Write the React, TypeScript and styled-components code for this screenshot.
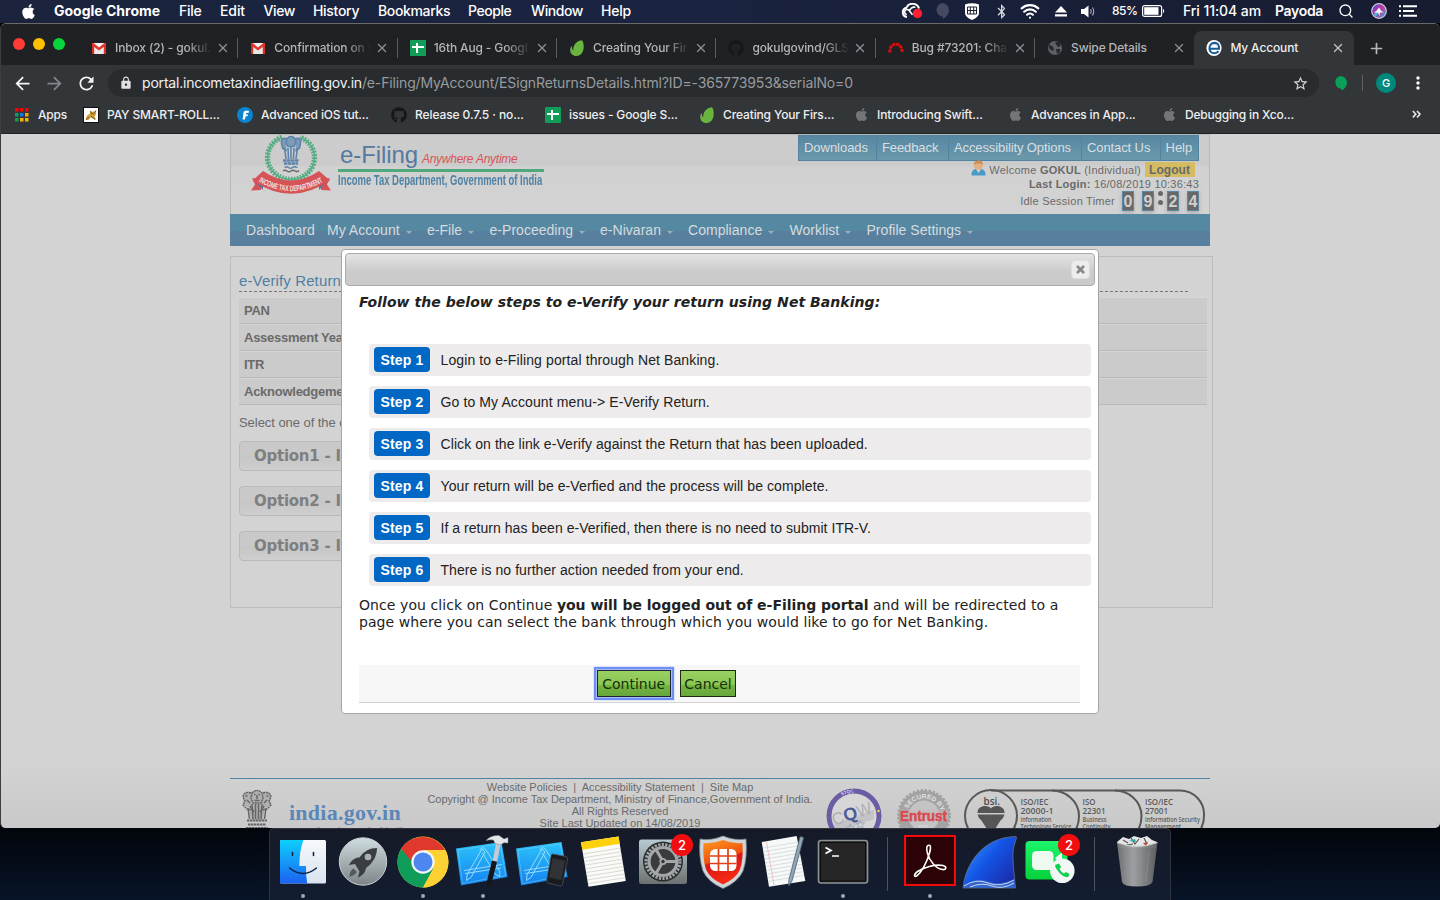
import React from 'react';
import styled, { createGlobalStyle } from 'styled-components';
import { FaApple, FaGithub, FaBluetoothB } from 'react-icons/fa';
import { MdArrowBack, MdArrowForward, MdRefresh, MdLock, MdStarBorder, MdMoreVert } from 'react-icons/md';
import { Search, Wifi, X, Plus } from 'lucide-react';

const UI = 'Inter, "Open Sans", sans-serif';
const ARIAL = '"Liberation Sans", Arial, sans-serif';
const VERDANA = '"DejaVu Sans", Verdana, sans-serif';

const Global = createGlobalStyle`
  *, *::before, *::after { box-sizing: border-box; }
  body { margin: 0; background: #040a18; overflow: hidden; }
  svg { display: block; flex: none; }
`;

const Desktop = styled.div`
  width: 1440px;
  height: 900px;
  display: flex;
  flex-direction: column;
  overflow: hidden;
  background: linear-gradient(#02050b 828px, #071427 900px);
`;

/* ---------- macOS menu bar ---------- */

const MenuBar = styled.header`
  height: 23px;
  flex: none;
  display: flex;
  align-items: flex-start;
  background: linear-gradient(90deg, #1b243c, #1a2340 45%, #171c30);
  color: #fff;
  font: 500 14px/22px ${UI};
`;

const MenuSlot = styled.div<{ $w: number; $ls?: number; $weight?: number; $size?: number }>`
  width: ${p => p.$w}px;
  height: 22px;
  flex: none;
  display: flex;
  align-items: center;
  white-space: pre;
  letter-spacing: ${p => p.$ls ?? 0}px;
  font-weight: ${p => p.$weight ?? 500};
  font-size: ${p => p.$size ?? 14}px;
`;

const menus: [string, number, number, number][] = [
  ['Google Chrome', 125, 0, 700],
  ['File', 41, -0.3, 500],
  ['Edit', 43.5, -0.1, 500],
  ['View', 49.5, -0.4, 500],
  ['History', 65, -0.3, 500],
  ['Bookmarks', 90, -0.36, 500],
  ['People', 63, -0.45, 500],
  ['Window', 70, -0.4, 500],
  ['Help', 300, -0.2, 500],
];

/* ---------- Browser window ---------- */

const BrowserWindow = styled.div`
  height: 805px;
  flex: none;
  display: flex;
  flex-direction: column;
  border-top: 1px solid #6a6a68;
  border-left: 1px solid #3b3e41;
  border-radius: 6px 6px 5px 5px;
  overflow: hidden;
  background: #202124;
`;

const TabStrip = styled.div`
  height: 41px;
  flex: none;
  display: flex;
  align-items: flex-end;
  background: #202124;
`;

const Lights = styled.div`
  width: 78px;
  height: 41px;
  padding: 0 0 1px 12px;
  display: flex;
  align-items: center;
  gap: 8px;
`;

const Light = styled.i<{ $c: string }>`
  width: 12px;
  height: 12px;
  border-radius: 50%;
  background: ${p => p.$c};
`;

const TabBox = styled.div<{ $active?: boolean; $sep?: boolean }>`
  position: relative;
  width: ${p => (p.$active ? 160 : 159.35)}px;
  height: 34px;
  flex: none;
  padding-left: 12px;
  display: flex;
  align-items: center;
  font: 500 12px/16px ${UI};
  letter-spacing: -0.14px;
  color: ${p => (p.$active ? '#eceded' : '#b4b6b9')};
  background: ${p => (p.$active ? '#323639' : 'transparent')};
  border-radius: 8px 8px 0 0;
  &::after {
    content: '';
    position: absolute;
    right: 0;
    top: 7px;
    height: 20px;
    width: 1px;
    background: ${p => (p.$sep ? '#5a5c60' : 'transparent')};
  }
`;

const TabLabel = styled.span<{ $fade?: boolean }>`
  width: 97px;
  margin-left: 8px;
  overflow: hidden;
  white-space: nowrap;
  ${p => p.$fade && 'mask-image: linear-gradient(90deg, #000 72px, transparent 97px);'}
`;

const TabClose = styled(X)`
  margin-left: 4px;
  color: #8d9094;
`;

const NewTab = styled.div`
  height: 34px;
  margin-left: 14px;
  display: flex;
  align-items: center;
  color: #b5b8bb;
`;

const Toolbar = styled.div`
  height: 36px;
  flex: none;
  display: flex;
  align-items: center;
  padding-left: 5px;
  background: #323639;
  color: #fff;
`;

const NavButton = styled.span<{ $dim?: boolean }>`
  width: 32px;
  display: flex;
  justify-content: center;
  color: ${p => (p.$dim ? '#84878a' : '#f4f4f4')};
`;

const Omnibox = styled.div`
  width: 1211px;
  height: 28px;
  margin: 0 15px 0 6px;
  padding: 0 10px 0 11px;
  border-radius: 14px;
  display: flex;
  align-items: center;
  background: #282c2f;
  font: 400 14px/20px ${UI};
`;

const Host = styled.span`
  margin-left: 9px;
  color: #f0f1f2;
  letter-spacing: -0.19px;
`;

const Path = styled.span`
  flex: 1;
  color: #989b9f;
  letter-spacing: -0.138px;
`;

const ToolDivider = styled.i`
  width: 1px;
  height: 16px;
  margin: 0 13px 0 15px;
  background: #5c6063;
`;

const Avatar = styled.span`
  width: 20px;
  height: 20px;
  margin-right: 12px;
  border-radius: 50%;
  background: #00897b;
  font: 500 11px/20px ${UI};
  text-align: center;
`;

const BookmarkBar = styled.div`
  height: 33px;
  flex: none;
  padding: 0 0 5px 13px;
  display: flex;
  align-items: center;
  background: #323639;
  border-bottom: 1px solid #212427;
  color: #eeeff0;
  font: 500 12px/16px ${UI};
`;

const Bookmark = styled.span<{ $w: number; $ls: number }>`
  width: ${p => p.$w}px;
  flex: none;
  display: flex;
  align-items: center;
  gap: 8px;
  white-space: nowrap;
  letter-spacing: ${p => p.$ls}px;
`;

/* ---------- e-Filing page ---------- */

const Page = styled.main`
  position: relative;
  flex: 1;
  min-height: 0;
  overflow: hidden;
  padding-left: 229px;
  background: linear-gradient(#d3d3d3 630px, #c9c9c9 694px);
  color: #6a6a6a;
  font-family: ${ARIAL};
`;

const SiteHeader = styled.div`
  width: 980px;
  height: 80px;
  display: flex;
  justify-content: space-between;
  border: 1px solid #b9b9b9;
  border-bottom: 0;
  background: linear-gradient(#cdcdcd, #cbcbcb 30px, #d1d1d1 32px, #d3d3d3);
  padding: 0 10px 0 19px;
`;

const Brand = styled.div`
  display: flex;
`;

const BrandText = styled.div`
  width: 206px;
  margin: 5px 0 0 6px;
`;

const BrandTitle = styled.div`
  height: 28px;
  display: flex;
  align-items: baseline;
  gap: 4px;
  padding-left: 2px;
  font-size: 24px;
  line-height: 29px;
  letter-spacing: -0.1px;
  color: #557a9f;
  white-space: nowrap;
  em {
    font-size: 12px;
    letter-spacing: -0.25px;
    color: #d95458;
  }
`;

const BrandSub = styled.div`
  margin-top: 1px;
  border-top: 3px solid #4fa97c;
  white-space: nowrap;
  color: #4f82a3;
  span {
    display: block;
    width: 302px;
    font: bold 14px/17px ${ARIAL};
    transform: scaleX(0.677);
    transform-origin: 0 0;
  }
`;

const HeaderSide = styled.div`
  display: flex;
  flex-direction: column;
  align-items: flex-end;
`;

const TopLinks = styled.div`
  display: flex;
  height: 26px;
`;

const TopLink = styled.span<{ $w: number; $ls: number }>`
  width: ${p => p.$w}px;
  padding-left: 5px;
  font-size: 13px;
  line-height: 24px;
  letter-spacing: ${p => p.$ls}px;
  white-space: nowrap;
  color: #d9dfe2;
  border: 1px solid #5283a0;
  border-left-width: 0;
  background: linear-gradient(#5788a2, #6b99ab);
  &:first-child { border-left-width: 1px; }
`;

const Welcome = styled.div`
  height: 17px;
  display: flex;
  align-items: center;
  font-size: 11px;
  letter-spacing: 0.25px;
  white-space: pre;
  padding-right: 4px;
  svg { margin: -3px 3px 0 0; }
`;

const Logout = styled.b`
  margin-left: 4px;
  width: 50px;
  height: 15px;
  padding-left: 4px;
  font-size: 12px;
  line-height: 16px;
  letter-spacing: 0.06px;
  background: #d5bb62;
`;

const LastLogin = styled.div`
  font-size: 11px;
  line-height: 12px;
  letter-spacing: 0.22px;
`;

const Timer = styled.div`
  height: 20px;
  display: flex;
  align-items: center;
  font-size: 11px;
  letter-spacing: 0.24px;
  margin-top: 1px;
`;

const Digit = styled.span<{ $ml: number }>`
  width: 12px;
  height: 20px;
  margin-left: ${p => p.$ml}px;
  border: 1px solid #5b87a5;
  background: #686868;
  color: #cfcfcf;
  font: bold 16px/20px ${ARIAL};
  text-align: center;
  box-shadow: 0 2px 4px #8888;
  display: flex;
  justify-content: center;
`;

const Colon = styled.span`
  width: 5px;
  height: 20px;
  margin-left: 4px;
  display: flex;
  flex-direction: column;
  gap: 4px;
  i {
    width: 5px;
    height: 5px;
    border-radius: 50%;
    background: #686868;
  }
`;

const SiteNav = styled.nav`
  width: 980px;
  height: 32px;
  padding-left: 16px;
  display: flex;
  background: linear-gradient(#5589a2 17px, #587f9d 17px);
  color: #d5dbde;
  font-size: 14px;
  line-height: 33px;
`;

const SiteNavItem = styled.span<{ $w: number }>`
  width: ${p => p.$w}px;
  display: flex;
  align-items: center;
  gap: 6px;
  white-space: nowrap;
  letter-spacing: 0.03px;
`;

const Caret = styled.i`
  width: 0;
  height: 0;
  margin-top: 5px;
  border: 3px solid transparent;
  border-bottom: 0;
  border-top-color: #a3aeb3;
`;

const ContentBox = styled.section`
  width: 983px;
  height: 352px;
  margin-top: 10px;
  padding: 14px 5px 0 8px;
  border: 1px solid #bcbcbc;
`;

const PageTitle = styled.h1`
  width: 949px;
  height: 21px;
  margin: 0 0 5px;
  border-bottom: 1px dashed #777;
  font: 400 15px/19px ${ARIAL};
  letter-spacing: 0.13px;
  color: #50809f;
`;

const DetailRow = styled.div`
  height: 27px;
  padding: 0 5px;
  border-bottom: 1px solid #bababa;
  font: bold 13px/25px ${ARIAL};
  letter-spacing: -0.26px;
  border-top: 1px solid #d6d6d6;
  background: #cbcbcb;
  white-space: nowrap;
`;

const SelectHint = styled.p`
  margin: 10px 0 11px;
  font-size: 13px;
  line-height: 15px;
  letter-spacing: -0.05px;
`;

const OptionBar = styled.div`
  width: 850px;
  height: 30px;
  margin-bottom: 15px;
  padding-left: 14px;
  border: 1px solid #bababa;
  border-radius: 4px;
  background: linear-gradient(#c9c9c9 50%, #c6c6c6 50%, #cecece);
  font: bold 15px/29px ${VERDANA};
  letter-spacing: -0.25px;
  color: #7f7f7f;
`;

const SiteFooter = styled.footer`
  width: 980px;
  margin-top: 170px;
  height: 80px;
  border-top: 1px solid #5083a3;
  display: flex;
`;

const FooterLeft = styled.div`
  width: 195px;
  display: flex;
  padding: 9px 0 0 11px;
  gap: 16px;
`;

const IndiaGov = styled.div`
  margin-top: 11px;
  font: bold 22px/28px "Liberation Serif", serif;
  letter-spacing: 0.26px;
  color: #5b87b8;
  white-space: nowrap;
  small {
    display: block;
    margin: -2px 0 0 14px;
    font: 400 10px/14px ${ARIAL};
    letter-spacing: 0.3px;
  }
`;

const FooterText = styled.div`
  width: 390px;
  padding-top: 2px;
  text-align: center;
  white-space: pre;
  font-size: 11px;
  line-height: 12px;
`;

/* ---------- Dialog ---------- */

const Dialog = styled.div`
  position: absolute;
  left: 340px;
  top: 115px;
  width: 758px;
  height: 465px;
  padding: 3px;
  border: 1px solid #a6a6a6;
  border-radius: 4px;
  background: #fff;
  color: #222;
`;

const DialogBar = styled.div`
  height: 33px;
  padding: 6px 4px 0 0;
  display: flex;
  justify-content: flex-end;
  border: 1px solid #aaa;
  border-radius: 4px;
  background: linear-gradient(#e4e4e4, #cccccc 55%, #cacaca);
`;

const DialogClose = styled.span`
  width: 19px;
  height: 19px;
  display: flex;
  align-items: center;
  justify-content: center;
  border: 1px solid #dedede;
  border-radius: 4px;
  background: #ededed;
  color: #888;
`;

const DialogBody = styled.div`
  padding: 8px 4px 0 14px;
`;

const DialogHeading = styled.h2`
  margin: 0 0 33px;
  font: italic bold 14px/17px ${VERDANA};
  letter-spacing: 0.05px;
  white-space: nowrap;
`;

const Step = styled.div`
  height: 32px;
  margin: 0 0 10px 10px;
  padding-left: 5px;
  display: flex;
  align-items: center;
  border-radius: 4px;
  background: #edebeb;
`;

const StepBadge = styled.b`
  width: 56px;
  height: 25px;
  margin: -1px 10.5px 0 0;
  border-radius: 4px;
  background: #0067c5;
  color: #fff;
  font: bold 14px/26px ${ARIAL};
  letter-spacing: 0.2px;
  text-align: center;
`;

const StepText = styled.span<{ $ls: number }>`
  font: 400 14px/32px ${ARIAL};
  letter-spacing: ${p => p.$ls}px;
`;

const Note = styled.p`
  margin: 0;
  padding-top: 1px;
  font: 400 14px/17px ${VERDANA};
  letter-spacing: 0.075px;
  white-space: nowrap;
  b { letter-spacing: -0.02px; }
`;

const ButtonRow = styled.div`
  width: 721px;
  height: 38px;
  margin-top: 34px;
  padding: 5px 0 0 237.5px;
  display: flex;
  gap: 9px;
  border-bottom: 1px solid #d2d2d2;
  background: #f7f7f7;
`;

const GreenButton = styled.button<{ $w: number; $focus?: boolean }>`
  width: ${p => p.$w}px;
  height: 27px;
  padding: 0;
  border: 1px solid #1c2b12;
  border-radius: 0;
  background: linear-gradient(#98d062, #8cc653 55%, #77b540 55%, #66a63c);
  color: #14300a;
  font: 400 14px/27px ${VERDANA};
  white-space: nowrap;
  ${p => p.$focus && 'border-color: #1b2138; box-shadow: 0 0 0 1px #a9bdf6, 0 0 1px 3px #6d8ef2;'}
`;

const ButtonLabel = styled.span`
  display: block;
  line-height: 27px;
`;

/* ---------- Dock ---------- */

const DockShelf = styled.div`
  width: 902px;
  height: 72px;
  margin-left: 269px;
  flex: none;
  display: flex;
  padding-left: 3px;
  border: 1px solid #30343f;
  border-bottom: 0;
  border-radius: 5px 5px 0 0;
  background: linear-gradient(#161a28, #121d30);
`;

const DockSlot = styled.div`
  position: relative;
  width: 60px;
  height: 72px;
  flex: none;
  svg { margin-top: -1px; }
`;

const RunningDot = styled.i`
  position: absolute;
  left: 28px;
  top: 65px;
  width: 4px;
  height: 4px;
  border-radius: 50%;
  background: #a4a8b3;
`;

const Badge = styled.b`
  position: absolute;
  left: 38px;
  top: 5px;
  width: 22px;
  height: 22px;
  border-radius: 50%;
  background: #f20d10;
  color: #fff;
  font: 500 13px/22px ${UI};
  text-align: center;
`;

const DockDivider = styled.i`
  width: 27px;
  height: 54px;
  margin-top: 8px;
  background: linear-gradient(#4e5360, #4e5360) 14px 0 / 1px 100% no-repeat;
`;

/* ---------- Small icons ---------- */

const Gmail = () => (
  <svg width="16" height="16" viewBox="0 0 16 16">
    <path d="M1 3h14v11H1z" fill="#e9e9e9" />
    <path d="M1 14V4l2.2 1.6V14zM15 14V4l-2.2 1.6V14z" fill="#d93025" />
    <path d="M1 3.6L8 9l7-5.4V3H1z" fill="#f4f4f4" />
    <path d="M1 3h1.6L8 7.4 13.4 3H15v2.2L8 10.4 1 5.2z" fill="#e0362b" />
  </svg>
);

const Sheets = () => (
  <svg width="16" height="16" viewBox="0 0 16 16">
    <rect width="16" height="16" rx="1" fill="#0f9d58" />
    <path d="M6 3h2v3h6v2H8v5H6V8H2V6h4z" fill="#fff" />
  </svg>
);

const Leaf = () => (
  <svg width="16" height="16" viewBox="0 0 16 16">
    <path d="M12.6.3c1.5.6 2.4 4.2 2 8.200-.5 4.500-3.400 7.500-7.200 7.500-3.700 0-6.300-2.600-6.200-6 .1-1.800.6-3 1.300-4 .4 0 .3.500.3 1.100.1 1.500.6 2.900 1.500 3.500C3.700 6 6.800 1.200 12.600.3z" fill="#69b53f" />
  </svg>
);

const Redmine = () => (
  <svg width="16" height="16" viewBox="0 0 16 16">
    <path d="M1.800 12.500C1.800 7.500 4 4.200 8 4.200s6.200 3.300 6.200 8.300" fill="none" stroke="#e00d0d" strokeWidth="2.900" strokeDasharray="3.200 .7" />
  </svg>
);

const Globe = () => (
  <svg width="16" height="16" viewBox="0 0 16 16">
    <circle cx="8" cy="8" r="7" fill="#5d6065" />
    <path d="M2 5c2 0 3 1 4 2l1 2-1 2-2-1-2-2zM8 2l4 0 2 3-2 2-2-1-1-2zM9 9l4 0 0 3-3 2z" fill="#26282b" />
  </svg>
);

const EFav = () => (
  <svg width="16" height="16" viewBox="0 0 16 16">
    <ellipse cx="8" cy="8" rx="7.600" ry="8" fill="#fff" />
    <path d="M4 8.800h9c.4-3.800-1.600-5.900-4.500-5.900-3.200 0-5 2.400-5 5.300 0 3 1.900 5 4.800 5 1.800 0 3.200-.6 4.200-2" fill="none" stroke="#1a5d96" strokeWidth="2.100" />
    <path d="M4.800 6.500C7 4 9.500 4 12 6" fill="none" stroke="#b9c9d6" strokeWidth="1" />
  </svg>
);

const AppsGrid = () => (
  <svg width="16" height="16" viewBox="0 0 16 16">
    {['#f00', '#f00', '#f00', '#0f9d58', '#1a73e8', '#f4a300', '#0f9d58', '#fbb100', '#fbb100'].map((c, i) => (
      <rect key={i} x={1 + (i % 3) * 5} y={1 + Math.floor(i / 3) * 5} width="3.500" height="3.500" fill={c} />
    ))}
  </svg>
);

const TomCat = () => (
  <svg width="16" height="16" viewBox="0 0 16 16">
    <rect x=".5" y=".5" width="15" height="15" fill="#fff" stroke="#111" />
    <path d="M2.500 13l1.500-4.500 2.500-1.500L7.500 4l2 1L13 3.500v4l-1.500 2 2 3.500-3.500-1.500-2.500-1-2 2.500z" fill="#d1a03d" />
    <path d="M3 12.500l3-2.500M9 6.500l2 .8M8 9l4 3.500M7.500 4l1 3M13 3.500L11 6" stroke="#5a4014" strokeWidth=".8" />
  </svg>
);

const FCircle = () => (
  <svg width="16" height="16" viewBox="0 0 16 16">
    <circle cx="8" cy="8" r="8" fill="#0a84cf" />
    <path d="M5.600 12.500L6.500 5.500Q6.900 3.800 8.500 3.800H12L11.500 6H9.200L9 7.500H11L10.600 9.300H8.600L8 12.500z" fill="#fff" />
  </svg>
);

const DarkGithub = () => <FaGithub size={16} color="#15171a" />;

const AppleSlot = styled.span`
  width: 16px;
  display: flex;
  justify-content: center;
  color: #737679;
`;
const GreyApple = () => <AppleSlot><FaApple size={15} /></AppleSlot>;

const CreativeCloud = () => (
  <svg width="22" height="16" viewBox="0 0 22 16">
    <path d="M6 14a4.700 4.700 0 0 1-.7-9.200A6.800 6.800 0 0 1 18 5.500" fill="none" stroke="#fff" strokeWidth="2" />
    <path d="M5.800 11.500a2.500 2.500 0 1 1 2.300-4l3.400 4.200M8.400 8.500c.3-3 3-4.800 6-4.200" fill="none" stroke="#fff" strokeWidth="1.600" />
    <circle cx="16.500" cy="10.500" r="4.700" fill="#ff1f30" />
  </svg>
);

const Bubble = ({ c, s }: { c: string; s: number }) => (
  <svg width={s} height={s * 1.15} viewBox="0 0 14 16">
    <path d="M7 0a7 7 0 0 1 7 7c0 4-3.200 7.400-6 9v-2.200A7 7 0 0 1 7 0z" fill={c} />
  </svg>
);

const ShieldIcon = () => (
  <svg width="14" height="17" viewBox="0 0 14 17">
    <path d="M0 1.500Q7-1 14 1.500V10Q14 14 7 17 0 14 0 10z" fill="#fff" />
    <path d="M2 7.500h10M5.300 4v7M8.700 4v7" stroke="#1a2035" strokeWidth="1" />
    <path d="M2.500 4h9v7h-9z" fill="none" stroke="#1a2035" strokeWidth="1" />
  </svg>
);

const Eject = () => (
  <svg width="12" height="11" viewBox="0 0 12 11">
    <path d="M6 0l6 6.500H0zM0 8.300h12V10.500H0z" fill="#fff" />
  </svg>
);

const Speaker = () => (
  <svg width="14" height="13" viewBox="0 0 14 13">
    <path d="M0 4h3l4.500-3.500v12L3 9H0z" fill="#fff" />
    <path d="M9.500 4.300q1.300 2.200 0 4.400M11.500 2.500q2.400 4 0 8" fill="none" stroke="#aab" strokeWidth="1.100" />
  </svg>
);

const Battery = () => (
  <svg width="23" height="12" viewBox="0 0 23 12">
    <rect x=".6" y=".6" width="19" height="10.800" rx="2" fill="none" stroke="#fff" strokeWidth="1.200" />
    <rect x="2.200" y="2.200" width="14.300" height="7.600" fill="#fff" />
    <path d="M21 4c1.500.4 1.500 3.600 0 4z" fill="#fff" />
  </svg>
);

const Siri = () => (
  <svg width="16" height="16" viewBox="0 0 16 16">
    <defs>
      <linearGradient id="siri" x1="0" y1="0" x2="1" y2="1">
        <stop offset="0" stopColor="#3a4cd8" />
        <stop offset=".5" stopColor="#c7379c" />
        <stop offset="1" stopColor="#10b8d8" />
      </linearGradient>
    </defs>
    <circle cx="8" cy="8" r="7.300" fill="url(#siri)" stroke="#c9cbe0" strokeWidth="1.200" />
    <path d="M2.500 11.500L5 13.500 8 8z" fill="#22d3e0" />
    <path d="M3 9.500Q6 8 8 4.500q1.500 3.500 5 5-2.500 0-4 0L8.500 13 7 9.500Q5 10 3 9.500z" fill="#f1f6ff" />
  </svg>
);

const ListIcon = () => (
  <svg width="18" height="12" viewBox="0 0 18 12">
    <path d="M0 1.300h2M0 6h2M0 10.700h2M4 1.300h14M4 6h11M4 10.700h14" stroke="#fff" strokeWidth="1.900" />
  </svg>
);

const Person = () => (
  <svg width="15" height="16" viewBox="0 0 15 16">
    <path d="M.5 15.500c-.2-4 1.500-6 4-6.500h6c2.500.5 4.200 2.500 4 6.500z" fill="#4a9bc9" />
    <path d="M5 9l2.500 4L10 9z" fill="#dcd6d0" />
    <circle cx="7.500" cy="5.300" r="4.600" fill="#e0b183" />
    <path d="M2.900 4.800C3 1.500 5 .4 7.500.4s4.500 1.100 4.600 4.400C10 3 5 3 2.900 4.800z" fill="#c98d50" />
  </svg>
);

/* ---------- Emblems ---------- */

const Lions = ({ c, w, h }: { c: string; w: number; h: number }) => (
  <svg width={w} height={h} viewBox="0 0 32 44">
    <path d="M11 4q5-4 10 0 7-2 9 4l-1 9-5 3-2 12H10L8 20l-5-3-1-9q2-6 9-4z" fill={c} opacity=".28" />
    <g fill="none" stroke={c} strokeWidth="1.500">
      <path d="M11 5q5-5 10 0l1 5-2 5h-8l-2-5z" strokeDasharray="2 .6" />
      <path d="M10 5Q3 3 2 9l2 4-2 4 4 4 5 1M22 5q7-2 8 4l-2 4 2 4-4 4-5 1" strokeDasharray="2 .7" />
      <path d="M13 6.500h1.500M17.500 6.500H19M16 7v4M13.500 12.500h5M4.500 8h2M25.500 8h2M6 12l3 3M26 12l-3 3" />
      <path d="M7 20l1.500 11M11 16l1 15M14.500 16v15M17.500 16v15M21 16l-1 15M25 20l-1.500 11" />
      <path d="M9 18l4 6M23 18l-4 6" />
      <path d="M6 32.500h20M7 36.500h18M5 40h22" strokeWidth="2.200" strokeDasharray="2.500 .5" />
    </g>
  </svg>
);

const TaxEmblem = () => (
  <svg width="82" height="60" viewBox="0 0 82 60">
    <g fill="none" stroke="#57ad84">
      <path d="M32 2.200A23.500 22 0 1 0 50 2.200" strokeWidth="5.400" strokeDasharray="1.800 1.300" />
      <path d="M32 2.200A23.500 22 0 1 0 50 2.200" strokeWidth="1.600" />
    </g>
    <g fill="none" stroke="#5c83ab" strokeWidth="1.600">
      <path d="M37 3.500q4-4 8 0l1 4-2 4h-6l-2-4zM36 3.500q-5.500-1-4.500 4.500l1 5 4 3M46 3.500q5.500-1 4.500 4.500l-1 5-4 3" fill="#7d9cba" />
      <path d="M34.500 13l1.500 11M38 13l.5 11M41 11v13M44 13l-.5 11M47.500 13L46 24" />
      <path d="M33 25.500h16M34 28.500h14" strokeWidth="2.400" strokeDasharray="3.500 .4" />
    </g>
    <path d="M34.500 32.500q2-1.500 4 0t4 0 5 0" fill="none" stroke="#5c83ab" strokeWidth="1.300" />
    <path d="M33 36q2-1.500 4 0t4 0 4 0 4-.5" fill="none" stroke="#6a6a6a" strokeWidth="1.500" />
    <path d="M2 43l10 2-1 10-10 .5 4-6zM80 43l-10 2 1 10 10 .5-4-6z" fill="#d65357" />
    <path d="M4 45l9 0v10zM78 45l-9 0v10z" fill="#4f78a6" />
    <path d="M13 36Q41 55 69 36l11 9.500Q41 72 2.500 45.500z" fill="#d65357" />
    <path id="ribbon" d="M8.500 46.500Q41 66 74.500 46" fill="none" />
    <text fontFamily="Liberation Sans, sans-serif" fontWeight="700" fontSize="8" fill="#efe2e2">
      <textPath href="#ribbon" textLength="68" lengthAdjust="spacingAndGlyphs">INCOME TAX DEPARTMENT</textPath>
    </text>
  </svg>
);

const SealWrap = styled.div`
  display: flex;
  padding: 9px 0 0 11px;
`;

const Seals = () => (
  <svg width="382" height="60" viewBox="0 0 382 60">
    <g>
      <circle cx="28" cy="28" r="25" fill="#d6d6d6" stroke="#6c5ca4" strokeWidth="5" />
      <path id="stqc" d="M6 19A24 24 0 0 1 50 19" fill="none" />
      <text fontFamily="Liberation Sans, sans-serif" fontSize="4.500" fontWeight="700" fill="#d8d4e4">
        <textPath href="#stqc" startOffset="15">STQC</textPath>
      </text>
      <path d="M8 36L48 22v9L12 44z" fill="#c3c3c8" />
      <g fontFamily="Liberation Sans, sans-serif" fontSize="17" transform="rotate(-18 28 28)">
        <text x="6" y="31" fill="#aeb0b5" textLength="12" lengthAdjust="spacingAndGlyphs">C</text>
        <text x="18" y="31" fontSize="18" fontWeight="700" fill="#4e5b98" textLength="14" lengthAdjust="spacingAndGlyphs">Q</text>
        <text x="32" y="31" fill="#aeb0b5" textLength="15" lengthAdjust="spacingAndGlyphs">W</text>
      </g>
      <path d="M24 36l1.500 3 3 .2-2.300 2 1 3-3-1.700-2.600 1.700.8-3-2.200-2 3-.2zM34 32l1.500 3 3 .2-2.300 2 1 3-3-1.700-2.600 1.700.8-3-2.200-2 3-.2z" fill="none" stroke="#93a5bb" strokeWidth=".8" />
      <circle cx="52.500" cy="23" r="1.200" fill="#e4de5a" />
    </g>
    <g>
      <circle cx="98" cy="28" r="25.500" fill="#a3a3a3" stroke="#a3a3a3" strokeWidth="3" strokeDasharray="2.400 1.600" />
      <circle cx="98" cy="28" r="15.500" fill="#c4c4c4" />
      <path id="sec" d="M80.500 28A17.500 17.500 0 0 1 115.500 28" fill="none" />
      <text fontFamily="Liberation Sans, sans-serif" fontSize="6.500" fontWeight="700" fill="#e0e0e0">
        <textPath href="#sec" startOffset="7">SECURED BY</textPath>
      </text>
      <rect x="74" y="21.500" width="48" height="11.500" fill="#c4baba" opacity=".6" />
      <text x="74" y="32.500" fontFamily="Liberation Sans, sans-serif" fontSize="14" fontWeight="700" fill="#d84a4e" stroke="#d84a4e" strokeWidth=".5" textLength="47" lengthAdjust="spacingAndGlyphs">Entrust</text>
      <text x="92" y="41" fontFamily="Liberation Sans, sans-serif" fontSize="6" fill="#e0e0e0">SSL</text>
    </g>
    <g fill="none" stroke="#585858" strokeWidth="2">
      <path d="M165 2.500H354a24 24 0 0 1 24 25.500q0 10-6 17" />
      <circle cx="165" cy="28" r="26" />
      <path d="M226 2.500c13 0 27 10 27 25.500 0 8-2 13-6 17M289 2.500c13 0 26.500 10 26.500 25.500 0 8-2 13-6 17" />
    </g>
    <text x="157.500" y="16.500" fontFamily="Open Sans, sans-serif" fontSize="11.500" fontWeight="600" fill="#4c4c4c" textLength="16.500" lengthAdjust="spacingAndGlyphs">bsi.</text>
    <path d="M151.500 25c-.5-7 9.500-9 13.500-4.500 4-4.500 14-2.500 13.500 4.500zM151.500 26.500h27q-.5 3-4 6l-4.500 7v5h-10v-5l-4.500-7q-3.500-3-4-6z" fill="#555" />
    <g fontFamily="Open Sans, sans-serif" fontWeight="600" fill="#5a5a5a">
      {([
        [194.5, 'ISO/IEC', 28, '20000-1', 33, 'Information', 31, 'Technology Service', 51],
        [256.5, 'ISO', 13, '22301', 23, 'Business', 24, 'Continuity', 28],
        [319, 'ISO/IEC', 28, '27001', 23, 'Information Security', 55, 'Management', 36],
      ] as [number, string, number, string, number, string, number, string, number][]).map((r, i) => (
        <g key={i}>
          <text x={r[0]} y="16.500" fontSize="9" textLength={r[2]} lengthAdjust="spacingAndGlyphs">{r[1]}</text>
          <text x={r[0]} y="26" fontSize="9" textLength={r[4]} lengthAdjust="spacingAndGlyphs">{r[3]}</text>
          <text x={r[0]} y="33.500" fontSize="6.500" textLength={r[6]} lengthAdjust="spacingAndGlyphs">{r[5]}</text>
          <text x={r[0]} y="41" fontSize="6.500" textLength={r[8]} lengthAdjust="spacingAndGlyphs">{r[7]}</text>
        </g>
      ))}
    </g>
  </svg>
);

/* ---------- Dock icons ---------- */

const Frame = ({ children }: { children: React.ReactNode }) => (
  <svg width="60" height="72" viewBox="0 0 60 72">{children}</svg>
);

const Finder = () => (
  <Frame>
    <defs>
      <linearGradient id="fa" x1="0" y1="0" x2="0" y2="1"><stop offset="0" stopColor="#0ed0ff" /><stop offset="1" stopColor="#1b62f0" /></linearGradient>
      <linearGradient id="fb" x1="0" y1="0" x2="0" y2="1"><stop offset="0" stopColor="#f8f8fb" /><stop offset="1" stopColor="#d8e4f1" /></linearGradient>
    </defs>
    <rect x="7" y="12" width="46" height="43.500" rx="1.500" fill="url(#fb)" />
    <path d="M8.500 12H30.500q-4 10-4.200 26H33q-.2 9 1.200 17.500H8.500Q7 55.500 7 54V13.500Q7 12 8.500 12z" fill="url(#fa)" />
    <path d="M19.500 24.500v3M40.500 24.500v3" stroke="#16243a" strokeWidth="1.600" strokeLinecap="round" />
    <path d="M16.500 40q13.500 11 27 0" fill="none" stroke="#10203a" strokeWidth="1.400" strokeLinecap="round" />
  </Frame>
);

const Launchpad = () => (
  <Frame>
    <defs>
      <linearGradient id="lp" x1="0" y1="0" x2="0" y2="1"><stop offset="0" stopColor="#cfdcdf" /><stop offset="1" stopColor="#7d8487" /></linearGradient>
    </defs>
    <circle cx="30" cy="33.500" r="23.700" fill="url(#lp)" stroke="#c8cfd2" strokeWidth="1" />
    <path d="M44 20c-7 0-13 3-17.500 9.500-4 0-7.500 2-10.500 7.500l6-1 4.500 7.500-1.500 6c4.500-2 7.500-5 8-9.500C40 35 44 28 44 20z" fill="#3b3e41" />
    <path d="M20.500 40.500q-4 2-4 8.500 5-1.500 7.500-5z" fill="#54585b" />
    <circle cx="35" cy="29" r="3.300" fill="#a9b3b7" />
  </Frame>
);

const Chrome = () => (
  <Frame>
    <circle cx="30" cy="34" r="25.500" fill="#fdd133" />
    <path d="M30 34L7.900 21.200A25.500 25.500 0 0 0 30 59.500L41 40z" fill="#109d59" />
    <path d="M30 34L7.900 21.200A25.500 25.500 0 0 1 52 22H30z" fill="#e1382d" />
    <path d="M8.500 20.300L19.500 39 22 24z" fill="#e1382d" />
    <path d="M8 21L19.200 40.200 30 46z" fill="#109d59" />
    <path d="M40.500 40L30 59.500A25.500 25.500 0 0 0 52.500 22.300H32z" fill="#fdd133" />
    <circle cx="30" cy="34" r="11.700" fill="#f4f6fa" />
    <circle cx="30" cy="34" r="9.500" fill="#4b87ef" />
  </Frame>
);

const Blueprint = () => (
  <>
    <defs>
      <linearGradient id="bp" x1="0" y1="0" x2="0" y2="1"><stop offset="0" stopColor="#2cc4fb" /><stop offset="1" stopColor="#1482ee" /></linearGradient>
    </defs>
    <path d="M3 20.500L48.500 14 54.500 49 8 57.500z" fill="url(#bp)" />
    <path d="M5 22L47.500 16 52.500 47.500 9.500 55.500z" fill="none" stroke="#78d4fb" strokeWidth=".5" />
    <g fill="none" stroke="#a5e0fc" strokeWidth=".9">
      <path d="M29 21L14 47l-.5 5.500 4.500-3L32 24zM26.500 22q3.500-4.500 6.500 0l14 22-.5 4.500-4.500-2.500-12.500-21M11 42.500l38-6M12 45.500l36-5.500" />
    </g>
  </>
);

const Xcode = () => (
  <Frame>
    <Blueprint />
    <path d="M43.500 13l4.500 1-4 20.500-4.500-1z" fill="#c3cad1" />
    <path d="M39 32.500l5 1.200L38.200 57q-2.700 2-5-.8z" fill="#15171b" />
    <path d="M33 12.500q5-5.500 13-5l5 3.500 4-1.500v5.500l-4-.3-3 1.800-6-1-1.500-3.500q-3.500-.5-7.500.5z" fill="#e3e7ea" stroke="#7c858e" strokeWidth=".5" />
  </Frame>
);

const Simulator = () => (
  <Frame>
    <Blueprint />
    <path d="M40 26l13 2.500q2 .5 1.500 2.500l-5 25.500q-.5 2-2.500 1.500l-12-3q-1.800-.5-1.400-2.500l4.500-25q.4-1.800 1.900-1.500z" fill="#1a1b1e" stroke="#55585e" strokeWidth=".7" />
    <path d="M39.500 30l12.500 2.500-3.600 19.500-12.400-2.600z" fill="#303236" />
  </Frame>
);

const Notes = () => (
  <Frame>
    <path d="M8 14.300L45.500 8.500 52.800 53 15.500 58.700z" fill="#fafaf6" />
    <path d="M8 14.300L45.500 8.500l1.300 7.200L9.300 21.800z" fill="#fdd20c" />
    {[0, 1, 2, 3, 4, 5, 6, 7, 8].map(i => (
      <path key={i} d={`M${10.3 + i * 0.62} ${26 + i * 3.7}l37-5.900`} stroke="#cfcfcb" strokeWidth=".8" />
    ))}
  </Frame>
);

const Settings = () => (
  <Frame>
    <defs>
      <linearGradient id="st" x1="0" y1="0" x2="0" y2="1"><stop offset="0" stopColor="#b7cbd2" /><stop offset="1" stopColor="#6e7071" /></linearGradient>
    </defs>
    <rect x="6" y="11.500" width="48" height="44.500" rx="2.500" fill="url(#st)" />
    <circle cx="30" cy="33.500" r="20" fill="#2c2e30" />
    <circle cx="30" cy="33.500" r="17" fill="none" stroke="#a4a7a9" strokeWidth="3" strokeDasharray="2.200 1.360" />
    <circle cx="30" cy="33.500" r="14" fill="#393b3d" stroke="#a4a7a9" strokeWidth="3.200" />
    <path d="M30 33.500H44M30 33.500L23 21.400M30 33.500L23 45.600" stroke="#a4a7a9" strokeWidth="3" />
    <circle cx="30" cy="33.500" r="3.600" fill="#a4a7a9" />
    <circle cx="30" cy="33.500" r="1.700" fill="#333" />
  </Frame>
);

const Forti = () => (
  <Frame>
    <defs>
      <linearGradient id="fo" x1="0" y1="0" x2=".3" y2="1"><stop offset="0" stopColor="#ff9a1e" /><stop offset=".5" stopColor="#f0530f" /><stop offset=".55" stopColor="#d91616" /><stop offset="1" stopColor="#f52a14" /></linearGradient>
    </defs>
    <path d="M30 8Q42 13 53 11q1.500 19-3 32Q45 54 30 60.500 15 54 10 43 5.500 30 7 11q11 2 23-3z" fill="#cfd6da" stroke="#7b858b" strokeWidth=".8" />
    <path d="M30 12q10 4 19.500 3 1 16-2.500 26.500Q43 50.500 30 56.500 17 50.500 13 41.500 9.500 31 10.500 15 20 16 30 12z" fill="url(#fo)" />
    <rect x="17" y="21" width="26.500" height="22" rx="5.500" fill="#fff" />
    <path d="M17 28h26.500M17 35.500h26.500M25.500 21v22M35 21v22" stroke="#e0401a" strokeWidth="1.700" />
  </Frame>
);

const TextEdit = () => (
  <Frame>
    <path d="M8.700 14L43.700 8 52.300 53 16 58.800z" fill="#f7f8f8" />
    {[0, 1, 2, 3, 4, 5, 6, 7, 8, 9].map(i => (
      <path key={i} d={`M${10 + i * 0.65} ${20 + i * 3.7}l35-5.900`} stroke="#cdd2d6" strokeWidth=".7" />
    ))}
    <path d="M13.500 14l7.500 43" stroke="#e9a5a5" strokeWidth=".6" />
    <path d="M47 9q2.500-1 3.500 1L39 53l-3.300 5 .2-6z" fill="#8ea7b9" stroke="#4d5f6e" strokeWidth=".8" />
  </Frame>
);

const Terminal = () => (
  <Frame>
    <rect x="5.500" y="12.500" width="49" height="42.500" rx="2.500" fill="#232323" stroke="#8a9296" strokeWidth="1.600" />
    <rect x="7.500" y="14.500" width="45" height="38.500" fill="#262626" stroke="#0c0c0c" strokeWidth="1" />
    <path d="M12.500 19.500l5.500 3-5.500 3" fill="none" stroke="#fff" strokeWidth="1.700" />
    <path d="M19 28h7" stroke="#fff" strokeWidth="1.500" />
  </Frame>
);

const Acrobat = () => (
  <Frame>
    <rect x="5" y="8" width="50" height="49" fill="#2b0205" stroke="#f40a0a" strokeWidth="2" />
    <path d="M28 17.500c3-1.500 3 3 1.500 7.500-2.500 9-8 19.500-13 23-3 1.500-2.500-2 1-4.500 6-4 17-7.500 25.500-6 4.500 1.500 3 4.500-.5 4-6.500-1-13-8.500-15-16-1-4-1-7.300.5-8z" fill="none" stroke="#fff" strokeWidth="1.600" />
  </Frame>
);

const Wireshark = () => (
  <Frame>
    <defs>
      <linearGradient id="ws" x1="0" y1="0" x2="1" y2=".8"><stop offset="0" stopColor="#3fa0ff" /><stop offset=".5" stopColor="#1455e6" /><stop offset="1" stopColor="#1b2aa8" /></linearGradient>
    </defs>
    <path d="M3 60C6 34 24 9 56 8.500c2 1-3 8-3 17 0 14 1.500 22 2.500 34.500z" fill="url(#ws)" stroke="#6c7c94" strokeWidth=".7" />
    <path d="M3.300 58Q16 49 28 53.500T54.500 51l.8 9H3z" fill="#3565c8" />
    <path d="M4 58q12-8 24-3t26-3M10 59q12-5 22-1t22-3" fill="none" stroke="#c5d6f5" strokeWidth="1" />
  </Frame>
);

const FaceTime = () => (
  <Frame>
    <defs>
      <linearGradient id="ft" x1="0" y1="0" x2="0" y2="1"><stop offset="0" stopColor="#1cf46c" /><stop offset="1" stopColor="#06d23c" /></linearGradient>
    </defs>
    <rect x="5.500" y="13" width="42" height="38.500" rx="4" fill="url(#ft)" />
    <rect x="12" y="23" width="21.500" height="19" rx="4.500" fill="#eefaf0" />
    <path d="M35 30l7-5.500V38z" fill="#eefaf0" />
    <circle cx="42.300" cy="42.700" r="12.300" fill="#f2f6f4" />
    <path d="M36.500 36.500l2.500-1 2 3.500-1.500 2q1.500 3 4.500 4.500l2-1.500 3.500 2-1 2.500q-2.500 1.500-6-1t-6-6.500-.5-4.500z" fill="#0dd04c" />
  </Frame>
);

const Trash = () => (
  <Frame>
    <defs>
      <linearGradient id="tr" x1="0" x2="1"><stop offset="0" stopColor="#717375" /><stop offset=".4" stopColor="#a3a5a7" /><stop offset="1" stopColor="#5d5f62" /></linearGradient>
    </defs>
    <path d="M10 14l6-5 6 2 5-3 7 2 6-2 5 4 5 2-2 6H12z" fill="#e4e6e8" />
    <path d="M16 12l5 3M24 10l4 6 4-5M37 10l3 6M20 17l6-1" stroke="#555" strokeWidth="1.200" fill="none" />
    <path d="M22 13l6-2 1 3z" fill="#2ea6a0" />
    <path d="M36 15l5-1-2 4z" fill="#c04a3a" />
    <path d="M10 14.500q20 8 40.500 0L45.500 54q-2 4.500-15.500 4.500T15 54z" fill="url(#tr)" opacity=".96" />
    <path d="M10 14.500q20 8 40.500 0" fill="none" stroke="#c9cbcd" strokeWidth="1" />
    <path d="M18 22l3 32M26 24l1 32M34 24l-1 32M42 22l-3 32" stroke="#95989a" strokeWidth=".5" />
  </Frame>
);

/* ---------- Data ---------- */

const tabs: [React.FC, string, boolean][] = [
  [Gmail, 'Inbox (2) - gokul.', true],
  [Gmail, 'Confirmation on s', true],
  [Sheets, '16th Aug - Googl', true],
  [Leaf, 'Creating Your Fir', true],
  [DarkGithub, 'gokulgovind/GLS', true],
  [Redmine, 'Bug #73201: Cha', true],
  [Globe, 'Swipe Details', false],
];

const bookmarks: [React.FC, string, number, number][] = [
  [AppsGrid, 'Apps', 69, -0.2],
  [TomCat, 'PAY SMART-ROLL...', 154, -0.13],
  [FCircle, 'Advanced iOS tut...', 154, -0.16],
  [DarkGithub, 'Release 0.7.5 · no...', 154, -0.1],
  [Sheets, 'issues - Google S...', 154, -0.14],
  [Leaf, 'Creating Your Firs...', 154, -0.13],
  [GreyApple, 'Introducing Swift...', 154, -0.14],
  [GreyApple, 'Advances in App...', 154, -0.2],
  [GreyApple, 'Debugging in Xco...', 251, -0.2],
];

const topLinks: [string, number, number][] = [
  ['Downloads', 79, -0.03],
  ['Feedback', 72, -0.1],
  ['Accessibility Options', 133, -0.11],
  ['Contact Us', 78.5, -0.1],
  ['Help', 38.5, 0],
];

const siteNav: [string, number][] = [
  ['Dashboard', 81],
  ['My Account', 100],
  ['e-File', 62.5],
  ['e-Proceeding', 110.5],
  ['e-Nivaran', 88],
  ['Compliance', 101.5],
  ['Worklist', 77],
  ['Profile Settings', 120],
];

const steps: [string, number][] = [
  ['Login to e-Filing portal through Net Banking.', 0.11],
  ['Go to My Account menu-> E-Verify Return.', 0.11],
  ['Click on the link e-Verify against the Return that has been uploaded.', 0.08],
  ['Your return will be e-Verfied and the process will be complete.', 0.09],
  ['If a return has been e-Verified, then there is no need to submit ITR-V.', 0.04],
  ['There is no further action needed from your end.', 0.06],
];

const dockApps: ([React.FC, boolean, string?] | null)[] = [
  [Finder, true],
  [Launchpad, false],
  [Chrome, true],
  [Xcode, true],
  [Simulator, false],
  [Notes, false],
  [Settings, false, '2'],
  [Forti, false],
  [TextEdit, false],
  [Terminal, true],
  null,
  [Acrobat, true],
  [Wireshark, false],
  [FaceTime, false, '2'],
  null,
  [Trash, false],
];

export default function App() {
  return (
    <Desktop>
      <Global />
      <MenuBar>
        <MenuSlot $w={20} />
        <MenuSlot $w={34}><FaApple size={17} /></MenuSlot>
        {menus.map(([t, w, ls, weight]) => (
          <MenuSlot key={t} $w={w} $ls={ls} $weight={weight}>{t}</MenuSlot>
        ))}
        <MenuSlot $w={34}><CreativeCloud /></MenuSlot>
        <MenuSlot $w={30}><Bubble c="#454a60" s={14} /></MenuSlot>
        <MenuSlot $w={29}><ShieldIcon /></MenuSlot>
        <MenuSlot $w={26}><FaBluetoothB size={15} color="#d8dae2" /></MenuSlot>
        <MenuSlot $w={35}><Wifi size={20} strokeWidth={2.6} /></MenuSlot>
        <MenuSlot $w={26}><Eject /></MenuSlot>
        <MenuSlot $w={31}><Speaker /></MenuSlot>
        <MenuSlot $w={30} $ls={-0.5} $size={12}>85%</MenuSlot>
        <MenuSlot $w={41}><Battery /></MenuSlot>
        <MenuSlot $w={92} $ls={-0.08}>Fri 11:04 am</MenuSlot>
        <MenuSlot $w={63} $ls={-0.33} $weight={600}>Payoda</MenuSlot>
        <MenuSlot $w={33}><Search size={16} strokeWidth={2} /></MenuSlot>
        <MenuSlot $w={28}><Siri /></MenuSlot>
        <MenuSlot $w={20}><ListIcon /></MenuSlot>
      </MenuBar>

      <BrowserWindow>
        <TabStrip>
          <Lights>
            <Light $c="#ff3b36" />
            <Light $c="#ffc000" />
            <Light $c="#09d43c" />
          </Lights>
          {tabs.map(([Icon, label, fade], i) => (
            <TabBox key={label} $sep={i < 6}>
              <Icon />
              <TabLabel $fade={fade}>{label}</TabLabel>
              <TabClose size={14} strokeWidth={2.2} />
            </TabBox>
          ))}
          <TabBox $active>
            <EFav />
            <TabLabel>My Account</TabLabel>
            <TabClose size={14} strokeWidth={2.2} color="#c3c5c7" />
          </TabBox>
          <NewTab><Plus size={17} strokeWidth={2.4} /></NewTab>
        </TabStrip>

        <Toolbar>
          <NavButton><MdArrowBack size={21} /></NavButton>
          <NavButton $dim><MdArrowForward size={21} /></NavButton>
          <NavButton><MdRefresh size={21} /></NavButton>
          <Omnibox>
            <MdLock size={14} color="#dfe0e1" />
            <Host>portal.incometaxindiaefiling.gov.in</Host>
            <Path>/e-Filing/MyAccount/ESignReturnsDetails.html?ID=-365773953&amp;serialNo=0</Path>
            <MdStarBorder size={17} color="#d5d6d7" />
          </Omnibox>
          <Bubble c="#0ba05a" s={13} />
          <ToolDivider />
          <Avatar>G</Avatar>
          <MdMoreVert size={20} />
        </Toolbar>

        <BookmarkBar>
          {bookmarks.map(([Icon, label, w, ls]) => (
            <Bookmark key={label} $w={w} $ls={ls}><Icon />{label}</Bookmark>
          ))}
          <svg width="9" height="9" viewBox="0 0 9 9">
            <path d="M.8 1l3 3.200-3 3.200M5 1l3 3.200-3 3.200" fill="none" stroke="#e4e5e6" strokeWidth="1.600" />
          </svg>
        </BookmarkBar>

        <Page>
          <SiteHeader>
            <Brand>
              <TaxEmblem />
              <BrandText>
                <BrandTitle>e-Filing <em>Anywhere Anytime</em></BrandTitle>
                <BrandSub><span>Income Tax Department, Government of India</span></BrandSub>
              </BrandText>
            </Brand>
            <HeaderSide>
              <TopLinks>
                {topLinks.map(([t, w, ls]) => <TopLink key={t} $w={w} $ls={ls}>{t}</TopLink>)}
              </TopLinks>
              <Welcome>
                <Person />
                Welcome <b>GOKUL</b> (Individual)
                <Logout>Logout</Logout>
              </Welcome>
              <LastLogin><b>Last Login:</b> 16/08/2019 10:36:43</LastLogin>
              <Timer>
                Idle Session Timer
                <Digit $ml={7}>0</Digit>
                <Digit $ml={8}>9</Digit>
                <Colon><i /><i /></Colon>
                <Digit $ml={4}>2</Digit>
                <Digit $ml={8}>4</Digit>
              </Timer>
            </HeaderSide>
          </SiteHeader>
          <SiteNav>
            {siteNav.map(([t, w], i) => (
              <SiteNavItem key={t} $w={w}>{t}{i > 0 && <Caret />}</SiteNavItem>
            ))}
          </SiteNav>

          <ContentBox>
            <PageTitle>e-Verify Return</PageTitle>
            <DetailRow>PAN</DetailRow>
            <DetailRow>Assessment Year</DetailRow>
            <DetailRow>ITR</DetailRow>
            <DetailRow>Acknowledgement</DetailRow>
            <SelectHint>Select one of the options</SelectHint>
            <OptionBar>Option1 - I</OptionBar>
            <OptionBar>Option2 - I</OptionBar>
            <OptionBar>Option3 - I</OptionBar>
          </ContentBox>

          <SiteFooter>
            <FooterLeft>
              <Lions c="#666" w={32} h={44} />
              <IndiaGov>india.gov.in<small>national portal of india</small></IndiaGov>
            </FooterLeft>
            <FooterText>
              {'Website Policies  |  Accessibility Statement  |  Site Map\nCopyright @ Income Tax Department, Ministry of Finance,Government of India.\nAll Rights Reserved\nSite Last Updated on 14/08/2019'}
            </FooterText>
            <SealWrap><Seals /></SealWrap>
          </SiteFooter>

          <Dialog>
            <DialogBar>
              <DialogClose><X size={11} strokeWidth={6} /></DialogClose>
            </DialogBar>
            <DialogBody>
              <DialogHeading>Follow the below steps to e-Verify your return using Net Banking:</DialogHeading>
              {steps.map(([t, ls], i) => (
                <Step key={t}>
                  <StepBadge>Step {i + 1}</StepBadge>
                  <StepText $ls={ls}>{t}</StepText>
                </Step>
              ))}
              <Note>
                Once you click on Continue <b>you will be logged out of e-Filing portal</b> and will be redirected to a<br />
                page where you can select the bank through which you would like to go for Net Banking.
              </Note>
              <ButtonRow>
                <GreenButton $w={74.5} $focus><ButtonLabel>Continue</ButtonLabel></GreenButton>
                <GreenButton $w={56}><ButtonLabel>Cancel</ButtonLabel></GreenButton>
              </ButtonRow>
            </DialogBody>
          </Dialog>
        </Page>
      </BrowserWindow>

      <DockShelf>
        {dockApps.map((app, i) => {
          if (!app) return <DockDivider key={i} />;
          const [Icon, running, badge] = app;
          return (
            <DockSlot key={i}>
              <Icon />
              {running && <RunningDot />}
              {badge && <Badge>{badge}</Badge>}
            </DockSlot>
          );
        })}
      </DockShelf>
    </Desktop>
  );
}
